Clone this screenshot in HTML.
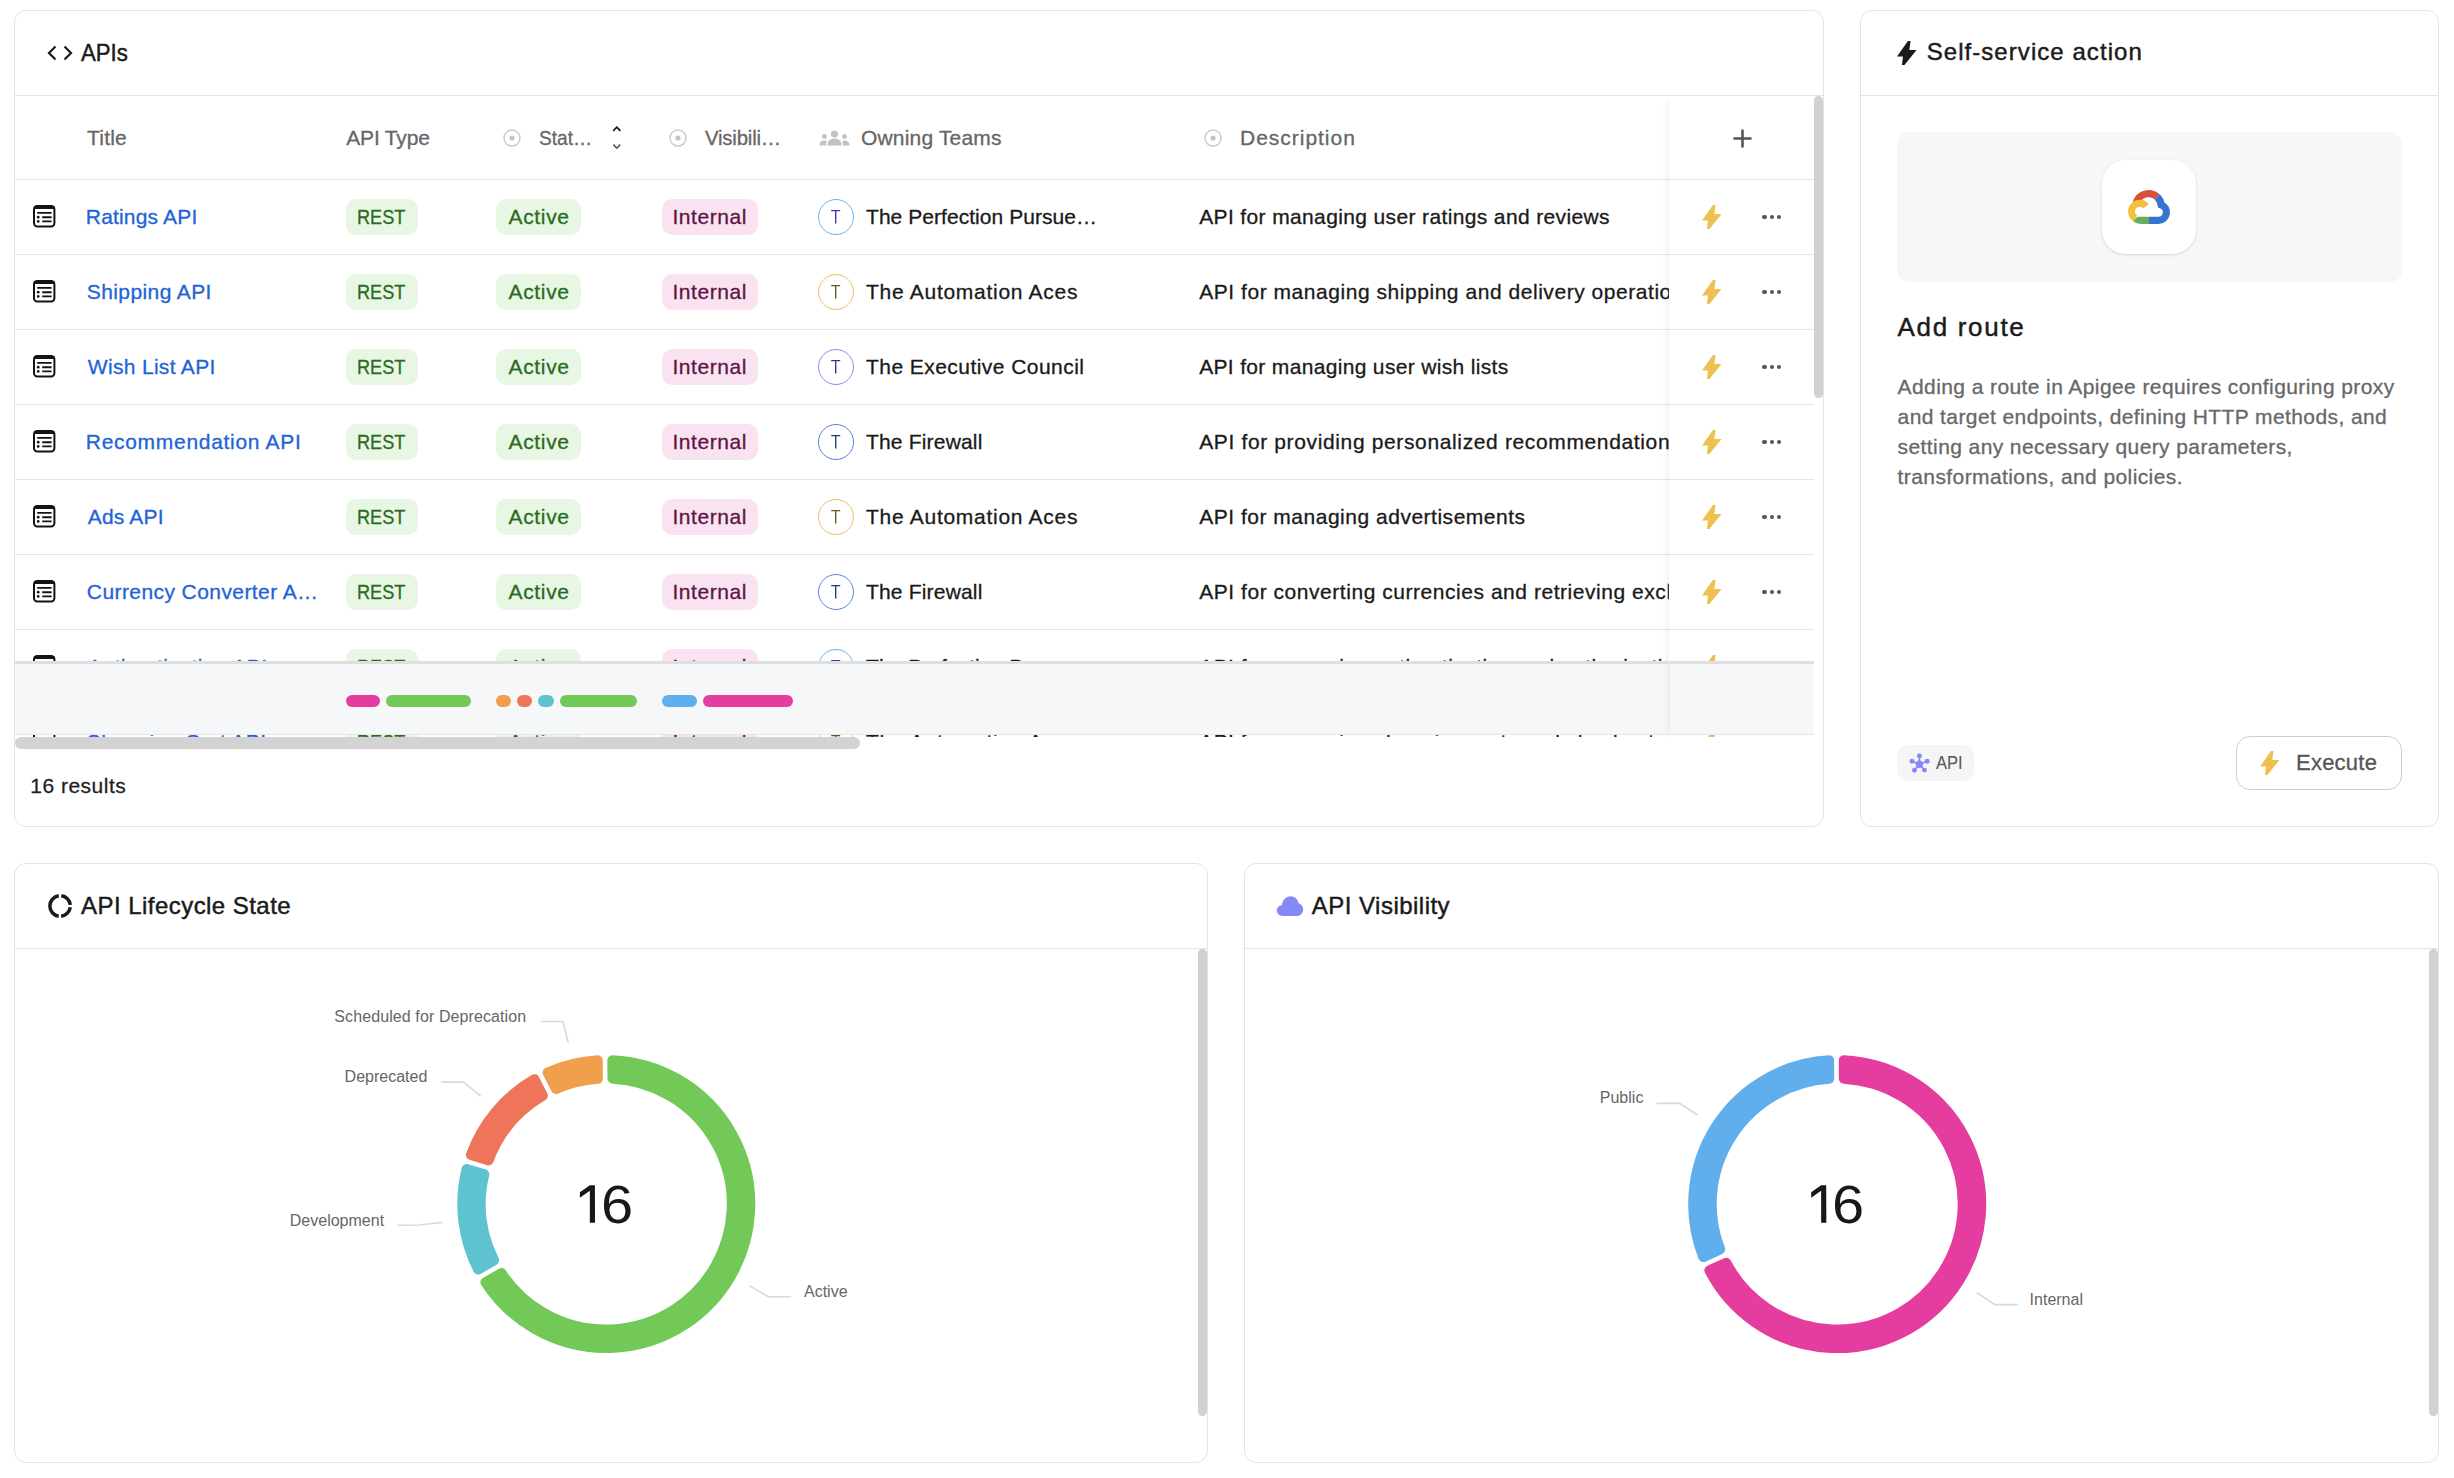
<!DOCTYPE html>
<html><head><meta charset="utf-8"><title>APIs dashboard</title>
<style>
html,body{margin:0;padding:0;background:#fff;}
body{width:2454px;height:1478px;position:relative;overflow:hidden;font-family:"Liberation Sans", sans-serif;}
.t{position:absolute;white-space:nowrap;-webkit-text-stroke:0.3px currentColor;}
</style></head><body>
<div style="position:absolute;left:14px;top:10px;width:1810px;height:817px;border:1px solid #e4e4e4;border-radius:12px;box-sizing:border-box;background:#fff"></div>
<div style="position:absolute;left:1860px;top:10px;width:579px;height:817px;border:1px solid #e4e4e4;border-radius:12px;box-sizing:border-box;background:#fff"></div>
<div style="position:absolute;left:14px;top:863px;width:1194px;height:600px;border:1px solid #e4e4e4;border-radius:12px;box-sizing:border-box;background:#fff"></div>
<div style="position:absolute;left:1244px;top:863px;width:1195px;height:600px;border:1px solid #e4e4e4;border-radius:12px;box-sizing:border-box;background:#fff"></div>
<div style="position:absolute;left:15px;top:95px;width:1808px;height:1px;background:#e4e4e4"></div>
<div style="position:absolute;left:1861px;top:95px;width:577px;height:1px;background:#e4e4e4"></div>
<div style="position:absolute;left:15px;top:948px;width:1192px;height:1px;background:#e4e4e4"></div>
<div style="position:absolute;left:1245px;top:948px;width:1193px;height:1px;background:#e4e4e4"></div>
<svg style="position:absolute;left:47px;top:45px" width="26" height="16" viewBox="0 0 26 16"><path d="M8.5 1.5 L2 8 L8.5 14.5 M17.5 1.5 L24 8 L17.5 14.5" fill="none" stroke="#1a1a1a" stroke-width="2.2" stroke-linecap="butt" stroke-linejoin="miter"/></svg>
<div class="t" style="left:81.40px;top:40.88px;font-size:24px;line-height:24px;color:#1a1a1a;letter-spacing:0px;font-weight:400;transform:scaleX(0.925);transform-origin:0 0;-webkit-text-stroke:0.45px #1a1a1a;">APIs</div>
<div style="position:absolute;left:15px;top:96px;width:1808px;height:641px;overflow:hidden">
<div style="position:absolute;left:0px;top:83px;width:1799px;height:1px;background:#e6e6e6"></div>
<div class="t" style="left:72.10px;top:31.22px;font-size:21px;line-height:21px;color:#666666;letter-spacing:0.2px;font-weight:400;">Title</div>
<div class="t" style="left:331.30px;top:31.22px;font-size:21px;line-height:21px;color:#666666;letter-spacing:-0.186px;font-weight:400;">API Type</div>
<svg style="position:absolute;left:487.7px;top:33.0px" width="18" height="18" viewBox="0 0 18 18"><circle cx="9" cy="9" r="8" fill="none" stroke="#c9c9c9" stroke-width="1.4"/><circle cx="9" cy="9" r="2.6" fill="#c4c4c4"/></svg>
<div class="t" style="left:524.09px;top:31.22px;font-size:21px;line-height:21px;color:#666666;letter-spacing:0px;font-weight:400;transform:scaleX(0.91);transform-origin:0 0;">Stat…</div>
<svg style="position:absolute;left:596px;top:29px" width="12" height="26" viewBox="0 0 12 26"><path d="M2.2 5.9 L5.8 2.2 L9.4 5.9" fill="none" stroke="#111" stroke-width="1.6"/><path d="M2.4 19.6 L5.8 23.2 L9.2 19.6" fill="none" stroke="#555" stroke-width="1.6"/></svg>
<svg style="position:absolute;left:653.7px;top:33.0px" width="18" height="18" viewBox="0 0 18 18"><circle cx="9" cy="9" r="8" fill="none" stroke="#c9c9c9" stroke-width="1.4"/><circle cx="9" cy="9" r="2.6" fill="#c4c4c4"/></svg>
<div class="t" style="left:690.40px;top:31.22px;font-size:21px;line-height:21px;color:#666666;letter-spacing:-0.2px;font-weight:400;transform:scaleX(0.97);transform-origin:0 0;">Visibili…</div>
<svg style="position:absolute;left:803.5px;top:34px" width="31" height="16" viewBox="0 0 31 16"><circle cx="15.5" cy="4" r="3.6" fill="#c2c2c2"/><path d="M8.5 15.5 C8.5 10.5 11.5 8.5 15.5 8.5 C19.5 8.5 22.5 10.5 22.5 15.5 Z" fill="#c2c2c2"/><circle cx="5.5" cy="6.5" r="2.4" fill="#c2c2c2"/><path d="M0.5 15.5 C0.5 12 2.5 10.5 5.5 10.5 C6.5 10.5 7.2 10.7 7.8 11 C7.2 12.3 7 13.8 7 15.5 Z" fill="#c2c2c2"/><circle cx="25.5" cy="6.5" r="2.4" fill="#c2c2c2"/><path d="M30.5 15.5 C30.5 12 28.5 10.5 25.5 10.5 C24.5 10.5 23.8 10.7 23.2 11 C23.8 12.3 24 13.8 24 15.5 Z" fill="#c2c2c2"/></svg>
<div class="t" style="left:846.00px;top:31.22px;font-size:21px;line-height:21px;color:#666666;letter-spacing:0.182px;font-weight:400;">Owning Teams</div>
<svg style="position:absolute;left:1189.3px;top:33.0px" width="18" height="18" viewBox="0 0 18 18"><circle cx="9" cy="9" r="8" fill="none" stroke="#c9c9c9" stroke-width="1.4"/><circle cx="9" cy="9" r="2.6" fill="#c4c4c4"/></svg>
<div class="t" style="left:1225.00px;top:31.22px;font-size:21px;line-height:21px;color:#666666;letter-spacing:0.98px;font-weight:400;">Description</div>
<div style="position:absolute;left:0px;top:158px;width:1799px;height:1px;background:#e6e6e6"></div>
<svg style="position:absolute;left:18.200000000000003px;top:109.19999999999999px" width="23" height="23" viewBox="0 0 23 23"><rect x="1" y="1" width="20.4" height="20.4" rx="3.2" fill="none" stroke="#141414" stroke-width="2"/><rect x="1" y="1" width="20.4" height="3" fill="#141414"/><path d="M4.2 7.9 H18.6 M9.2 12.2 H18.6 M9.2 16.4 H18.6" stroke="#141414" stroke-width="1.9"/><circle cx="5.2" cy="12.2" r="1.35" fill="#141414"/><circle cx="5.2" cy="16.4" r="1.35" fill="#141414"/></svg>
<div class="t" style="left:70.80px;top:110.02px;font-size:21px;line-height:21px;color:#2263d6;letter-spacing:0.18px;font-weight:400;">Ratings API</div>
<div style="position:absolute;left:331px;top:103px;width:72px;height:36px;background:#e8f6e4;border-radius:10px"></div>
<div class="t" style="left:341.78px;top:110.02px;font-size:21px;line-height:21px;color:#2b6b1f;letter-spacing:0px;font-weight:400;transform:scaleX(0.862);transform-origin:0 0;">REST</div>
<div style="position:absolute;left:481px;top:103px;width:85px;height:36px;background:#e8f6e4;border-radius:10px"></div>
<div class="t" style="left:493.50px;top:110.02px;font-size:21px;line-height:21px;color:#2b6b1f;letter-spacing:0.66px;font-weight:400;">Active</div>
<div style="position:absolute;left:647px;top:103px;width:96px;height:36px;background:#fae3f0;border-radius:10px"></div>
<div class="t" style="left:657.40px;top:110.02px;font-size:21px;line-height:21px;color:#5c1645;letter-spacing:0.571px;font-weight:400;">Internal</div>
<div style="position:absolute;left:803px;top:103px;width:36px;height:36px;border:1.5px solid #63b3f3;border-radius:50%;box-sizing:border-box;"></div>
<svg style="position:absolute;left:815px;top:113px" width="12" height="15" viewBox="0 0 12 15"><path d="M1.2 1.6 H10.2 M5.7 1.6 V14.4" stroke="#3a36c4" stroke-width="1.35" fill="none"/></svg>
<div class="t" style="left:851.00px;top:110.02px;font-size:21px;line-height:21px;color:#1a1a1a;letter-spacing:0.048px;font-weight:400;">The Perfection Pursue…</div>
<div class="t" style="left:1184.20px;top:110.02px;font-size:21px;line-height:21px;color:#1a1a1a;letter-spacing:0.367px;font-weight:400;">API for managing user ratings and reviews</div>
<div style="position:absolute;left:0px;top:233px;width:1799px;height:1px;background:#e6e6e6"></div>
<svg style="position:absolute;left:18.200000000000003px;top:184.2px" width="23" height="23" viewBox="0 0 23 23"><rect x="1" y="1" width="20.4" height="20.4" rx="3.2" fill="none" stroke="#141414" stroke-width="2"/><rect x="1" y="1" width="20.4" height="3" fill="#141414"/><path d="M4.2 7.9 H18.6 M9.2 12.2 H18.6 M9.2 16.4 H18.6" stroke="#141414" stroke-width="1.9"/><circle cx="5.2" cy="12.2" r="1.35" fill="#141414"/><circle cx="5.2" cy="16.4" r="1.35" fill="#141414"/></svg>
<div class="t" style="left:71.80px;top:185.02px;font-size:21px;line-height:21px;color:#2263d6;letter-spacing:0.4px;font-weight:400;">Shipping API</div>
<div style="position:absolute;left:331px;top:178px;width:72px;height:36px;background:#e8f6e4;border-radius:10px"></div>
<div class="t" style="left:341.78px;top:185.02px;font-size:21px;line-height:21px;color:#2b6b1f;letter-spacing:0px;font-weight:400;transform:scaleX(0.862);transform-origin:0 0;">REST</div>
<div style="position:absolute;left:481px;top:178px;width:85px;height:36px;background:#e8f6e4;border-radius:10px"></div>
<div class="t" style="left:493.50px;top:185.02px;font-size:21px;line-height:21px;color:#2b6b1f;letter-spacing:0.66px;font-weight:400;">Active</div>
<div style="position:absolute;left:647px;top:178px;width:96px;height:36px;background:#fae3f0;border-radius:10px"></div>
<div class="t" style="left:657.40px;top:185.02px;font-size:21px;line-height:21px;color:#5c1645;letter-spacing:0.571px;font-weight:400;">Internal</div>
<div style="position:absolute;left:803px;top:178px;width:36px;height:36px;border:1.5px solid #efc15e;border-radius:50%;box-sizing:border-box;"></div>
<svg style="position:absolute;left:815px;top:188px" width="12" height="15" viewBox="0 0 12 15"><path d="M1.2 1.6 H10.2 M5.7 1.6 V14.4" stroke="#6b5418" stroke-width="1.35" fill="none"/></svg>
<div class="t" style="left:851.00px;top:185.02px;font-size:21px;line-height:21px;color:#1a1a1a;letter-spacing:0.722px;font-weight:400;">The Automation Aces</div>
<div class="t" style="left:1184.20px;top:185.02px;font-size:21px;line-height:21px;color:#1a1a1a;letter-spacing:0.543px;font-weight:400;">API for managing shipping and delivery operations</div>
<div style="position:absolute;left:0px;top:308px;width:1799px;height:1px;background:#e6e6e6"></div>
<svg style="position:absolute;left:18.200000000000003px;top:259.2px" width="23" height="23" viewBox="0 0 23 23"><rect x="1" y="1" width="20.4" height="20.4" rx="3.2" fill="none" stroke="#141414" stroke-width="2"/><rect x="1" y="1" width="20.4" height="3" fill="#141414"/><path d="M4.2 7.9 H18.6 M9.2 12.2 H18.6 M9.2 16.4 H18.6" stroke="#141414" stroke-width="1.9"/><circle cx="5.2" cy="12.2" r="1.35" fill="#141414"/><circle cx="5.2" cy="16.4" r="1.35" fill="#141414"/></svg>
<div class="t" style="left:72.80px;top:260.02px;font-size:21px;line-height:21px;color:#2263d6;letter-spacing:0.317px;font-weight:400;">Wish List API</div>
<div style="position:absolute;left:331px;top:253px;width:72px;height:36px;background:#e8f6e4;border-radius:10px"></div>
<div class="t" style="left:341.78px;top:260.02px;font-size:21px;line-height:21px;color:#2b6b1f;letter-spacing:0px;font-weight:400;transform:scaleX(0.862);transform-origin:0 0;">REST</div>
<div style="position:absolute;left:481px;top:253px;width:85px;height:36px;background:#e8f6e4;border-radius:10px"></div>
<div class="t" style="left:493.50px;top:260.02px;font-size:21px;line-height:21px;color:#2b6b1f;letter-spacing:0.66px;font-weight:400;">Active</div>
<div style="position:absolute;left:647px;top:253px;width:96px;height:36px;background:#fae3f0;border-radius:10px"></div>
<div class="t" style="left:657.40px;top:260.02px;font-size:21px;line-height:21px;color:#5c1645;letter-spacing:0.571px;font-weight:400;">Internal</div>
<div style="position:absolute;left:803px;top:253px;width:36px;height:36px;border:1.5px solid #8c8cf3;border-radius:50%;box-sizing:border-box;"></div>
<svg style="position:absolute;left:815px;top:263px" width="12" height="15" viewBox="0 0 12 15"><path d="M1.2 1.6 H10.2 M5.7 1.6 V14.4" stroke="#30309a" stroke-width="1.35" fill="none"/></svg>
<div class="t" style="left:851.00px;top:260.02px;font-size:21px;line-height:21px;color:#1a1a1a;letter-spacing:0.45px;font-weight:400;">The Executive Council</div>
<div class="t" style="left:1184.20px;top:260.02px;font-size:21px;line-height:21px;color:#1a1a1a;letter-spacing:0.329px;font-weight:400;">API for managing user wish lists</div>
<div style="position:absolute;left:0px;top:383px;width:1799px;height:1px;background:#e6e6e6"></div>
<svg style="position:absolute;left:18.200000000000003px;top:334.2px" width="23" height="23" viewBox="0 0 23 23"><rect x="1" y="1" width="20.4" height="20.4" rx="3.2" fill="none" stroke="#141414" stroke-width="2"/><rect x="1" y="1" width="20.4" height="3" fill="#141414"/><path d="M4.2 7.9 H18.6 M9.2 12.2 H18.6 M9.2 16.4 H18.6" stroke="#141414" stroke-width="1.9"/><circle cx="5.2" cy="12.2" r="1.35" fill="#141414"/><circle cx="5.2" cy="16.4" r="1.35" fill="#141414"/></svg>
<div class="t" style="left:70.80px;top:335.02px;font-size:21px;line-height:21px;color:#2263d6;letter-spacing:0.7px;font-weight:400;">Recommendation API</div>
<div style="position:absolute;left:331px;top:328px;width:72px;height:36px;background:#e8f6e4;border-radius:10px"></div>
<div class="t" style="left:341.78px;top:335.02px;font-size:21px;line-height:21px;color:#2b6b1f;letter-spacing:0px;font-weight:400;transform:scaleX(0.862);transform-origin:0 0;">REST</div>
<div style="position:absolute;left:481px;top:328px;width:85px;height:36px;background:#e8f6e4;border-radius:10px"></div>
<div class="t" style="left:493.50px;top:335.02px;font-size:21px;line-height:21px;color:#2b6b1f;letter-spacing:0.66px;font-weight:400;">Active</div>
<div style="position:absolute;left:647px;top:328px;width:96px;height:36px;background:#fae3f0;border-radius:10px"></div>
<div class="t" style="left:657.40px;top:335.02px;font-size:21px;line-height:21px;color:#5c1645;letter-spacing:0.571px;font-weight:400;">Internal</div>
<div style="position:absolute;left:803px;top:328px;width:36px;height:36px;border:1.5px solid #5b7fe0;border-radius:50%;box-sizing:border-box;"></div>
<svg style="position:absolute;left:815px;top:338px" width="12" height="15" viewBox="0 0 12 15"><path d="M1.2 1.6 H10.2 M5.7 1.6 V14.4" stroke="#1e3a78" stroke-width="1.35" fill="none"/></svg>
<div class="t" style="left:851.00px;top:335.02px;font-size:21px;line-height:21px;color:#1a1a1a;letter-spacing:0.182px;font-weight:400;">The Firewall</div>
<div class="t" style="left:1184.20px;top:335.02px;font-size:21px;line-height:21px;color:#1a1a1a;letter-spacing:0.636px;font-weight:400;">API for providing personalized recommendations</div>
<div style="position:absolute;left:0px;top:458px;width:1799px;height:1px;background:#e6e6e6"></div>
<svg style="position:absolute;left:18.200000000000003px;top:409.2px" width="23" height="23" viewBox="0 0 23 23"><rect x="1" y="1" width="20.4" height="20.4" rx="3.2" fill="none" stroke="#141414" stroke-width="2"/><rect x="1" y="1" width="20.4" height="3" fill="#141414"/><path d="M4.2 7.9 H18.6 M9.2 12.2 H18.6 M9.2 16.4 H18.6" stroke="#141414" stroke-width="1.9"/><circle cx="5.2" cy="12.2" r="1.35" fill="#141414"/><circle cx="5.2" cy="16.4" r="1.35" fill="#141414"/></svg>
<div class="t" style="left:72.80px;top:410.02px;font-size:21px;line-height:21px;color:#2263d6;letter-spacing:0.167px;font-weight:400;">Ads API</div>
<div style="position:absolute;left:331px;top:403px;width:72px;height:36px;background:#e8f6e4;border-radius:10px"></div>
<div class="t" style="left:341.78px;top:410.02px;font-size:21px;line-height:21px;color:#2b6b1f;letter-spacing:0px;font-weight:400;transform:scaleX(0.862);transform-origin:0 0;">REST</div>
<div style="position:absolute;left:481px;top:403px;width:85px;height:36px;background:#e8f6e4;border-radius:10px"></div>
<div class="t" style="left:493.50px;top:410.02px;font-size:21px;line-height:21px;color:#2b6b1f;letter-spacing:0.66px;font-weight:400;">Active</div>
<div style="position:absolute;left:647px;top:403px;width:96px;height:36px;background:#fae3f0;border-radius:10px"></div>
<div class="t" style="left:657.40px;top:410.02px;font-size:21px;line-height:21px;color:#5c1645;letter-spacing:0.571px;font-weight:400;">Internal</div>
<div style="position:absolute;left:803px;top:403px;width:36px;height:36px;border:1.5px solid #efc15e;border-radius:50%;box-sizing:border-box;"></div>
<svg style="position:absolute;left:815px;top:413px" width="12" height="15" viewBox="0 0 12 15"><path d="M1.2 1.6 H10.2 M5.7 1.6 V14.4" stroke="#6b5418" stroke-width="1.35" fill="none"/></svg>
<div class="t" style="left:851.00px;top:410.02px;font-size:21px;line-height:21px;color:#1a1a1a;letter-spacing:0.722px;font-weight:400;">The Automation Aces</div>
<div class="t" style="left:1184.20px;top:410.02px;font-size:21px;line-height:21px;color:#1a1a1a;letter-spacing:0.513px;font-weight:400;">API for managing advertisements</div>
<div style="position:absolute;left:0px;top:533px;width:1799px;height:1px;background:#e6e6e6"></div>
<svg style="position:absolute;left:18.200000000000003px;top:484.20000000000005px" width="23" height="23" viewBox="0 0 23 23"><rect x="1" y="1" width="20.4" height="20.4" rx="3.2" fill="none" stroke="#141414" stroke-width="2"/><rect x="1" y="1" width="20.4" height="3" fill="#141414"/><path d="M4.2 7.9 H18.6 M9.2 12.2 H18.6 M9.2 16.4 H18.6" stroke="#141414" stroke-width="1.9"/><circle cx="5.2" cy="12.2" r="1.35" fill="#141414"/><circle cx="5.2" cy="16.4" r="1.35" fill="#141414"/></svg>
<div class="t" style="left:71.80px;top:485.02px;font-size:21px;line-height:21px;color:#2263d6;letter-spacing:0.42px;font-weight:400;">Currency Converter A…</div>
<div style="position:absolute;left:331px;top:478px;width:72px;height:36px;background:#e8f6e4;border-radius:10px"></div>
<div class="t" style="left:341.78px;top:485.02px;font-size:21px;line-height:21px;color:#2b6b1f;letter-spacing:0px;font-weight:400;transform:scaleX(0.862);transform-origin:0 0;">REST</div>
<div style="position:absolute;left:481px;top:478px;width:85px;height:36px;background:#e8f6e4;border-radius:10px"></div>
<div class="t" style="left:493.50px;top:485.02px;font-size:21px;line-height:21px;color:#2b6b1f;letter-spacing:0.66px;font-weight:400;">Active</div>
<div style="position:absolute;left:647px;top:478px;width:96px;height:36px;background:#fae3f0;border-radius:10px"></div>
<div class="t" style="left:657.40px;top:485.02px;font-size:21px;line-height:21px;color:#5c1645;letter-spacing:0.571px;font-weight:400;">Internal</div>
<div style="position:absolute;left:803px;top:478px;width:36px;height:36px;border:1.5px solid #5b7fe0;border-radius:50%;box-sizing:border-box;"></div>
<svg style="position:absolute;left:815px;top:488px" width="12" height="15" viewBox="0 0 12 15"><path d="M1.2 1.6 H10.2 M5.7 1.6 V14.4" stroke="#1e3a78" stroke-width="1.35" fill="none"/></svg>
<div class="t" style="left:851.00px;top:485.02px;font-size:21px;line-height:21px;color:#1a1a1a;letter-spacing:0.182px;font-weight:400;">The Firewall</div>
<div class="t" style="left:1184.20px;top:485.02px;font-size:21px;line-height:21px;color:#1a1a1a;letter-spacing:0.542px;font-weight:400;">API for converting currencies and retrieving exchange rates</div>
<div style="position:absolute;left:0px;top:608px;width:1799px;height:1px;background:#e6e6e6"></div>
<svg style="position:absolute;left:18.200000000000003px;top:559.2px" width="23" height="23" viewBox="0 0 23 23"><rect x="1" y="1" width="20.4" height="20.4" rx="3.2" fill="none" stroke="#141414" stroke-width="2"/><rect x="1" y="1" width="20.4" height="3" fill="#141414"/><path d="M4.2 7.9 H18.6 M9.2 12.2 H18.6 M9.2 16.4 H18.6" stroke="#141414" stroke-width="1.9"/><circle cx="5.2" cy="12.2" r="1.35" fill="#141414"/><circle cx="5.2" cy="16.4" r="1.35" fill="#141414"/></svg>
<div class="t" style="left:72.80px;top:560.02px;font-size:21px;line-height:21px;color:#2263d6;letter-spacing:0.45px;font-weight:400;">Authentication API</div>
<div style="position:absolute;left:331px;top:553px;width:72px;height:36px;background:#e8f6e4;border-radius:10px"></div>
<div class="t" style="left:341.78px;top:560.02px;font-size:21px;line-height:21px;color:#2b6b1f;letter-spacing:0px;font-weight:400;transform:scaleX(0.862);transform-origin:0 0;">REST</div>
<div style="position:absolute;left:481px;top:553px;width:85px;height:36px;background:#e8f6e4;border-radius:10px"></div>
<div class="t" style="left:493.50px;top:560.02px;font-size:21px;line-height:21px;color:#2b6b1f;letter-spacing:0.66px;font-weight:400;">Active</div>
<div style="position:absolute;left:647px;top:553px;width:96px;height:36px;background:#fae3f0;border-radius:10px"></div>
<div class="t" style="left:657.40px;top:560.02px;font-size:21px;line-height:21px;color:#5c1645;letter-spacing:0.571px;font-weight:400;">Internal</div>
<div style="position:absolute;left:803px;top:553px;width:36px;height:36px;border:1.5px solid #63b3f3;border-radius:50%;box-sizing:border-box;"></div>
<svg style="position:absolute;left:815px;top:563px" width="12" height="15" viewBox="0 0 12 15"><path d="M1.2 1.6 H10.2 M5.7 1.6 V14.4" stroke="#3a36c4" stroke-width="1.35" fill="none"/></svg>
<div class="t" style="left:851.00px;top:560.02px;font-size:21px;line-height:21px;color:#1a1a1a;letter-spacing:0.048px;font-weight:400;">The Perfection Pursue…</div>
<div class="t" style="left:1184.20px;top:560.02px;font-size:21px;line-height:21px;color:#1a1a1a;letter-spacing:0.45px;font-weight:400;">API for managing authentication and authorization</div>
<svg style="position:absolute;left:18.200000000000003px;top:634.2px" width="23" height="23" viewBox="0 0 23 23"><rect x="1" y="1" width="20.4" height="20.4" rx="3.2" fill="none" stroke="#141414" stroke-width="2"/><rect x="1" y="1" width="20.4" height="3" fill="#141414"/><path d="M4.2 7.9 H18.6 M9.2 12.2 H18.6 M9.2 16.4 H18.6" stroke="#141414" stroke-width="1.9"/><circle cx="5.2" cy="12.2" r="1.35" fill="#141414"/><circle cx="5.2" cy="16.4" r="1.35" fill="#141414"/></svg>
<div class="t" style="left:71.80px;top:635.02px;font-size:21px;line-height:21px;color:#2263d6;letter-spacing:0.4px;font-weight:400;">Shopping Cart API</div>
<div style="position:absolute;left:331px;top:628px;width:72px;height:36px;background:#e8f6e4;border-radius:10px"></div>
<div class="t" style="left:341.78px;top:635.02px;font-size:21px;line-height:21px;color:#2b6b1f;letter-spacing:0px;font-weight:400;transform:scaleX(0.862);transform-origin:0 0;">REST</div>
<div style="position:absolute;left:481px;top:628px;width:85px;height:36px;background:#e8f6e4;border-radius:10px"></div>
<div class="t" style="left:493.50px;top:635.02px;font-size:21px;line-height:21px;color:#2b6b1f;letter-spacing:0.66px;font-weight:400;">Active</div>
<div style="position:absolute;left:647px;top:628px;width:96px;height:36px;background:#fae3f0;border-radius:10px"></div>
<div class="t" style="left:657.40px;top:635.02px;font-size:21px;line-height:21px;color:#5c1645;letter-spacing:0.571px;font-weight:400;">Internal</div>
<div style="position:absolute;left:803px;top:628px;width:36px;height:36px;border:1.5px solid #efc15e;border-radius:50%;box-sizing:border-box;"></div>
<svg style="position:absolute;left:815px;top:638px" width="12" height="15" viewBox="0 0 12 15"><path d="M1.2 1.6 H10.2 M5.7 1.6 V14.4" stroke="#6b5418" stroke-width="1.35" fill="none"/></svg>
<div class="t" style="left:851.00px;top:635.02px;font-size:21px;line-height:21px;color:#1a1a1a;letter-spacing:0.722px;font-weight:400;">The Automation Aces</div>
<div class="t" style="left:1184.20px;top:635.02px;font-size:21px;line-height:21px;color:#1a1a1a;letter-spacing:0.45px;font-weight:400;">API for managing shopping carts and checkout</div>
<div style="position:absolute;left:1654px;top:0px;width:145px;height:653px;background:#fff;box-shadow:-5px 0 8px -5px rgba(0,0,0,0.10)"></div>
<div style="position:absolute;left:1654px;top:83px;width:145px;height:1px;background:#e6e6e6"></div>
<svg style="position:absolute;left:1718px;top:33px" width="19" height="19" viewBox="0 0 19 19"><path d="M9.5 1.5 V17.5 M1.5 9.5 H17.5" stroke="#555" stroke-width="2.6" stroke-linecap="round"/></svg>
<div style="position:absolute;left:1654px;top:158px;width:145px;height:1px;background:#e6e6e6"></div>
<svg style="position:absolute;left:1687.1px;top:108.95px" width="20" height="25" viewBox="0 0 20 25"><path d="M10.93 0 H13.56 L12.31 9.05 H19.56 L7.46 23.95 H4.95 L5.96 15.55 H0 Z" fill="#ecc14f"/></svg>
<div style="position:absolute;left:1747.4px;top:118.5px;width:4.9px;height:4.9px;border-radius:50%;background:#555"></div>
<div style="position:absolute;left:1754.5px;top:118.5px;width:4.9px;height:4.9px;border-radius:50%;background:#555"></div>
<div style="position:absolute;left:1761.6px;top:118.5px;width:4.9px;height:4.9px;border-radius:50%;background:#555"></div>
<div style="position:absolute;left:1654px;top:233px;width:145px;height:1px;background:#e6e6e6"></div>
<svg style="position:absolute;left:1687.1px;top:183.95px" width="20" height="25" viewBox="0 0 20 25"><path d="M10.93 0 H13.56 L12.31 9.05 H19.56 L7.46 23.95 H4.95 L5.96 15.55 H0 Z" fill="#ecc14f"/></svg>
<div style="position:absolute;left:1747.4px;top:193.5px;width:4.9px;height:4.9px;border-radius:50%;background:#555"></div>
<div style="position:absolute;left:1754.5px;top:193.5px;width:4.9px;height:4.9px;border-radius:50%;background:#555"></div>
<div style="position:absolute;left:1761.6px;top:193.5px;width:4.9px;height:4.9px;border-radius:50%;background:#555"></div>
<div style="position:absolute;left:1654px;top:308px;width:145px;height:1px;background:#e6e6e6"></div>
<svg style="position:absolute;left:1687.1px;top:258.95px" width="20" height="25" viewBox="0 0 20 25"><path d="M10.93 0 H13.56 L12.31 9.05 H19.56 L7.46 23.95 H4.95 L5.96 15.55 H0 Z" fill="#ecc14f"/></svg>
<div style="position:absolute;left:1747.4px;top:268.5px;width:4.9px;height:4.9px;border-radius:50%;background:#555"></div>
<div style="position:absolute;left:1754.5px;top:268.5px;width:4.9px;height:4.9px;border-radius:50%;background:#555"></div>
<div style="position:absolute;left:1761.6px;top:268.5px;width:4.9px;height:4.9px;border-radius:50%;background:#555"></div>
<div style="position:absolute;left:1654px;top:383px;width:145px;height:1px;background:#e6e6e6"></div>
<svg style="position:absolute;left:1687.1px;top:333.95px" width="20" height="25" viewBox="0 0 20 25"><path d="M10.93 0 H13.56 L12.31 9.05 H19.56 L7.46 23.95 H4.95 L5.96 15.55 H0 Z" fill="#ecc14f"/></svg>
<div style="position:absolute;left:1747.4px;top:343.5px;width:4.9px;height:4.9px;border-radius:50%;background:#555"></div>
<div style="position:absolute;left:1754.5px;top:343.5px;width:4.9px;height:4.9px;border-radius:50%;background:#555"></div>
<div style="position:absolute;left:1761.6px;top:343.5px;width:4.9px;height:4.9px;border-radius:50%;background:#555"></div>
<div style="position:absolute;left:1654px;top:458px;width:145px;height:1px;background:#e6e6e6"></div>
<svg style="position:absolute;left:1687.1px;top:408.95px" width="20" height="25" viewBox="0 0 20 25"><path d="M10.93 0 H13.56 L12.31 9.05 H19.56 L7.46 23.95 H4.95 L5.96 15.55 H0 Z" fill="#ecc14f"/></svg>
<div style="position:absolute;left:1747.4px;top:418.5px;width:4.9px;height:4.9px;border-radius:50%;background:#555"></div>
<div style="position:absolute;left:1754.5px;top:418.5px;width:4.9px;height:4.9px;border-radius:50%;background:#555"></div>
<div style="position:absolute;left:1761.6px;top:418.5px;width:4.9px;height:4.9px;border-radius:50%;background:#555"></div>
<div style="position:absolute;left:1654px;top:533px;width:145px;height:1px;background:#e6e6e6"></div>
<svg style="position:absolute;left:1687.1px;top:483.95px" width="20" height="25" viewBox="0 0 20 25"><path d="M10.93 0 H13.56 L12.31 9.05 H19.56 L7.46 23.95 H4.95 L5.96 15.55 H0 Z" fill="#ecc14f"/></svg>
<div style="position:absolute;left:1747.4px;top:493.5px;width:4.9px;height:4.9px;border-radius:50%;background:#555"></div>
<div style="position:absolute;left:1754.5px;top:493.5px;width:4.9px;height:4.9px;border-radius:50%;background:#555"></div>
<div style="position:absolute;left:1761.6px;top:493.5px;width:4.9px;height:4.9px;border-radius:50%;background:#555"></div>
<div style="position:absolute;left:1654px;top:608px;width:145px;height:1px;background:#e6e6e6"></div>
<svg style="position:absolute;left:1687.1px;top:558.95px" width="20" height="25" viewBox="0 0 20 25"><path d="M10.93 0 H13.56 L12.31 9.05 H19.56 L7.46 23.95 H4.95 L5.96 15.55 H0 Z" fill="#ecc14f"/></svg>
<div style="position:absolute;left:1747.4px;top:568.5px;width:4.9px;height:4.9px;border-radius:50%;background:#555"></div>
<div style="position:absolute;left:1754.5px;top:568.5px;width:4.9px;height:4.9px;border-radius:50%;background:#555"></div>
<div style="position:absolute;left:1761.6px;top:568.5px;width:4.9px;height:4.9px;border-radius:50%;background:#555"></div>
<svg style="position:absolute;left:1687.1px;top:633.95px" width="20" height="25" viewBox="0 0 20 25"><path d="M10.93 0 H13.56 L12.31 9.05 H19.56 L7.46 23.95 H4.95 L5.96 15.55 H0 Z" fill="#ecc14f"/></svg>
<div style="position:absolute;left:1747.4px;top:643.5px;width:4.9px;height:4.9px;border-radius:50%;background:#555"></div>
<div style="position:absolute;left:1754.5px;top:643.5px;width:4.9px;height:4.9px;border-radius:50%;background:#555"></div>
<div style="position:absolute;left:1761.6px;top:643.5px;width:4.9px;height:4.9px;border-radius:50%;background:#555"></div>
<div style="position:absolute;left:0px;top:565px;width:1799px;height:3px;background:#dfdfdf"></div>
<div style="position:absolute;left:0px;top:568px;width:1799px;height:71px;background:#f6f7f9;border-bottom:1px solid #e6e6e6;box-sizing:border-box"></div>
<div style="position:absolute;left:1654px;top:565px;width:145px;height:74px;box-shadow:-5px 0 8px -5px rgba(0,0,0,0.08);border-left:1px solid #ececec"></div>
<div style="position:absolute;left:331px;top:599px;width:34px;height:12px;background:#e53d9f;border-radius:6px"></div>
<div style="position:absolute;left:371px;top:599px;width:85px;height:12px;background:#72c957;border-radius:6px"></div>
<div style="position:absolute;left:481px;top:599px;width:15px;height:12px;background:#f0a04c;border-radius:6px"></div>
<div style="position:absolute;left:502px;top:599px;width:15px;height:12px;background:#ee7559;border-radius:6px"></div>
<div style="position:absolute;left:523px;top:599px;width:16px;height:12px;background:#5fc2cf;border-radius:6px"></div>
<div style="position:absolute;left:545px;top:599px;width:77px;height:12px;background:#72c957;border-radius:6px"></div>
<div style="position:absolute;left:647px;top:599px;width:35px;height:12px;background:#60aeeb;border-radius:6px"></div>
<div style="position:absolute;left:688px;top:599px;width:90px;height:12px;background:#e53d9f;border-radius:6px"></div>
</div>
<div style="position:absolute;left:15px;top:737px;width:845px;height:12px;background:#d3d3d3;border-radius:6px"></div>
<div style="position:absolute;left:1814px;top:96px;width:9px;height:302px;background:#d1d1d1;border-radius:4.5px"></div>
<div class="t" style="left:30.30px;top:775.22px;font-size:21px;line-height:21px;color:#1f1f1f;letter-spacing:0.489px;font-weight:400;">16 results</div>
<svg style="position:absolute;left:1896.5px;top:41px" width="20" height="25" viewBox="0 0 20 25"><path d="M10.93 0 H13.56 L12.31 9.05 H19.56 L7.46 23.95 H4.95 L5.96 15.55 H0 Z" fill="#1a1a1a"/></svg>
<div class="t" style="left:1926.70px;top:40.48px;font-size:24px;line-height:24px;color:#1a1a1a;letter-spacing:1.056px;font-weight:400;-webkit-text-stroke:0.45px #1a1a1a;">Self-service action</div>
<div style="position:absolute;left:1897px;top:132px;width:505px;height:150px;background:#f6f7f9;border-radius:12px"></div>
<div style="position:absolute;left:2102px;top:159.5px;width:94px;height:94.5px;background:#fff;border-radius:24px;box-shadow:0 1px 3px rgba(0,0,0,0.14)"></div>
<svg style="position:absolute;left:2090px;top:150px" width="120" height="115" viewBox="0 0 1542 1478">
<path d="M593.9 678.3 A166 166 0 0 1 861.1 601.1" fill="none" stroke="#d94f3d" stroke-width="92"/>
<path d="M861.1 601.1 Q905 640 915 704.7 A102.5 102.5 0 0 1 880 903.5 H755" fill="none" stroke="#3574cf" stroke-width="93"/>
<path d="M757 857 V950 H650 Q585 945 550 913 L612 857 Z" fill="#68ad5d"/>
<path d="M583.8 879.9 A106 106 0 1 1 721.2 721.9" fill="none" stroke="#f2c03d" stroke-width="88"/>
</svg>
<div class="t" style="left:1897.60px;top:313.99px;font-size:26px;line-height:26px;color:#1a1a1a;letter-spacing:1.675px;font-weight:400;-webkit-text-stroke:0.45px #1a1a1a;">Add route</div>
<div class="t" style="left:1897.60px;top:376.42px;font-size:21px;line-height:21px;color:#686868;letter-spacing:0.406px;font-weight:400;">Adding a route in Apigee requires configuring proxy</div>
<div class="t" style="left:1897.60px;top:406.12px;font-size:21px;line-height:21px;color:#686868;letter-spacing:0.406px;font-weight:400;">and target endpoints, defining HTTP methods, and</div>
<div class="t" style="left:1897.60px;top:435.82px;font-size:21px;line-height:21px;color:#686868;letter-spacing:0.406px;font-weight:400;">setting any necessary query parameters,</div>
<div class="t" style="left:1897.60px;top:465.52px;font-size:21px;line-height:21px;color:#686868;letter-spacing:0.406px;font-weight:400;">transformations, and policies.</div>
<div style="position:absolute;left:1897px;top:745px;width:77px;height:36px;background:#f5f5f5;border-radius:11px"></div>
<svg style="position:absolute;left:1908px;top:753px" width="23" height="21" viewBox="0 0 23 21">
<g stroke="#8589f5" stroke-width="1.7"><path d="M11.4 11.2 L11.4 2.9 M11.4 11.2 L4 8.3 M11.4 11.2 L19.2 8.3 M11.4 11.2 L6.5 17.3 M11.4 11.2 L16.5 17.1"/></g>
<g fill="#8589f5"><circle cx="11.4" cy="11.2" r="3.7"/><circle cx="11.4" cy="2.9" r="2.45"/><circle cx="4" cy="8.3" r="2.45"/><circle cx="19.2" cy="8.3" r="2.45"/><circle cx="6.5" cy="17.3" r="2.45"/><circle cx="16.5" cy="17.1" r="2.45"/></g></svg>
<div class="t" style="left:1936.40px;top:753.22px;font-size:19px;line-height:19px;color:#5a5a5a;letter-spacing:0px;font-weight:400;transform:scaleX(0.87);transform-origin:0 0;-webkit-text-stroke:0.1px #5a5a5a;">API</div>
<div style="position:absolute;left:2236px;top:736px;width:166px;height:53.5px;border:1.5px solid #cdcdcd;border-radius:14px;box-sizing:border-box"></div>
<svg style="position:absolute;left:2260.4px;top:751px" width="20" height="25" viewBox="0 0 20 25"><path d="M10.93 0 H13.56 L12.31 9.05 H19.56 L7.46 23.95 H4.95 L5.96 15.55 H0 Z" fill="#ecc14f"/></svg>
<div class="t" style="left:2296.00px;top:751.78px;font-size:22px;line-height:22px;color:#555;letter-spacing:0.233px;font-weight:400;">Execute</div>
<svg style="position:absolute;left:48px;top:894px" width="24.2" height="24" viewBox="0 0 24.2 24">
<circle cx="12.1" cy="12" r="10.25" fill="none" stroke="#1a1a1a" stroke-width="3.5" stroke-dasharray="13.6 2.5 13.6 2.5 29.2 2.5" stroke-dashoffset="-1.25" transform="rotate(-90 12.1 12)"/></svg>
<div class="t" style="left:81.10px;top:893.58px;font-size:24px;line-height:24px;color:#1a1a1a;letter-spacing:0.45px;font-weight:400;-webkit-text-stroke:0.45px #1a1a1a;">API Lifecycle State</div>
<svg style="position:absolute;left:1276px;top:895px" width="28" height="22" viewBox="0 0 28 22">
<path d="M7 21 C3.2 21 0.8 18.6 0.8 15.6 C0.8 12.7 3 10.5 5.8 10.2 C6.5 5 10 1.2 14.6 1.2 C18.6 1.2 21.8 4 22.5 8.2 C25.3 9 27.2 11.5 27.2 14.6 C27.2 18.2 24.6 21 21 21 Z" fill="#8589f5"/></svg>
<div class="t" style="left:1311.80px;top:893.58px;font-size:24px;line-height:24px;color:#1a1a1a;letter-spacing:0.477px;font-weight:400;-webkit-text-stroke:0.45px #1a1a1a;">API Visibility</div>
<div style="position:absolute;left:1198px;top:949px;width:9px;height:467px;background:#d1d1d1;border-radius:4.5px"></div>
<div style="position:absolute;left:2429px;top:949px;width:9px;height:467px;background:#d1d1d1;border-radius:4.5px"></div>
<svg style="position:absolute;left:0;top:0" width="2454" height="1478" viewBox="0 0 2454 1478">
<path d="M612.34 1060.13 A144 144 0 1 1 485.40 1282.23 L501.45 1272.97 A125.5 125.5 0 1 0 612.51 1078.65 Z" fill="#72c957" stroke="#72c957" stroke-width="10" stroke-linejoin="round"/>
<path d="M478.10 1269.59 A144 144 0 0 1 466.63 1168.93 L484.35 1174.35 A125.5 125.5 0 0 0 494.15 1260.32 Z" fill="#5fc2cf" stroke="#5fc2cf" stroke-width="10" stroke-linejoin="round"/>
<path d="M470.90 1154.97 A144 144 0 0 1 534.51 1079.17 L542.92 1095.68 A125.5 125.5 0 0 0 488.62 1160.39 Z" fill="#ee7559" stroke="#ee7559" stroke-width="10" stroke-linejoin="round"/>
<path d="M547.51 1072.55 A144 144 0 0 1 597.75 1060.25 L597.91 1078.78 A125.5 125.5 0 0 0 555.93 1089.05 Z" fill="#f0a04c" stroke="#f0a04c" stroke-width="10" stroke-linejoin="round"/>
<path d="M1843.75 1060.25 A144 144 0 1 1 1709.36 1270.38 L1726.22 1262.70 A125.5 125.5 0 1 0 1843.84 1078.78 Z" fill="#e53d9f" stroke="#e53d9f" stroke-width="10" stroke-linejoin="round"/>
<path d="M1703.31 1257.10 A144 144 0 0 1 1829.15 1060.33 L1829.24 1078.85 A125.5 125.5 0 0 0 1720.17 1249.41 Z" fill="#60aeeb" stroke="#60aeeb" stroke-width="10" stroke-linejoin="round"/>
<polyline points="541,1021.5 563,1021.5 568.2,1042.6" fill="none" stroke="#d9d9d9" stroke-width="1.6"/>
<polyline points="441.4,1082.1 463.6,1082.1 480.8,1096.4" fill="none" stroke="#d9d9d9" stroke-width="1.6"/>
<polyline points="397.4,1225.3 419.4,1225 442.1,1222.4" fill="none" stroke="#d9d9d9" stroke-width="1.6"/>
<polyline points="749.3,1285.6 768.4,1296.7 791.3,1296.7" fill="none" stroke="#d9d9d9" stroke-width="1.6"/>
<polyline points="1656.5,1103.4 1679.5,1103.4 1697.6,1115" fill="none" stroke="#d9d9d9" stroke-width="1.6"/>
<polyline points="1976.6,1292.7 1994.9,1304.6 2017.9,1304.6" fill="none" stroke="#d9d9d9" stroke-width="1.6"/>
</svg>
<div class="t" style="left:334.30px;top:1008.66px;font-size:16px;line-height:16px;color:#666;letter-spacing:0.1px;font-weight:400;-webkit-text-stroke:0;">Scheduled for Deprecation</div>
<div class="t" style="left:344.60px;top:1069.36px;font-size:16px;line-height:16px;color:#666;letter-spacing:0px;font-weight:400;-webkit-text-stroke:0;">Deprecated</div>
<div class="t" style="left:289.80px;top:1212.66px;font-size:16px;line-height:16px;color:#666;letter-spacing:0px;font-weight:400;-webkit-text-stroke:0;">Development</div>
<div class="t" style="left:804.00px;top:1284.06px;font-size:16px;line-height:16px;color:#666;letter-spacing:0px;font-weight:400;-webkit-text-stroke:0;">Active</div>
<div class="t" style="left:1599.80px;top:1090.36px;font-size:16px;line-height:16px;color:#666;letter-spacing:0px;font-weight:400;-webkit-text-stroke:0;">Public</div>
<div class="t" style="left:2029.60px;top:1292.26px;font-size:16px;line-height:16px;color:#666;letter-spacing:0px;font-weight:400;-webkit-text-stroke:0;">Internal</div>
<svg style="position:absolute;left:0;top:0" width="2454" height="1478"><polygon points="589.84,1185.16 579.90,1192.26 579.90,1197.71 589.84,1190.84 589.84,1222.82 595.05,1222.82 594.90,1185.16" fill="#181818"/></svg>
<div class="t" style="left:601.10px;top:1176.79px;font-size:54px;line-height:54px;color:#181818;letter-spacing:0px;font-weight:400;transform:scaleX(1.07);transform-origin:0 0;-webkit-text-stroke:0;">6</div>
<svg style="position:absolute;left:0;top:0" width="2454" height="1478"><polygon points="1821.14,1185.16 1811.20,1192.26 1811.20,1197.71 1821.14,1190.84 1821.14,1222.82 1826.35,1222.82 1826.20,1185.16" fill="#181818"/></svg>
<div class="t" style="left:1832.40px;top:1176.79px;font-size:54px;line-height:54px;color:#181818;letter-spacing:0px;font-weight:400;transform:scaleX(1.07);transform-origin:0 0;-webkit-text-stroke:0;">6</div>
</body></html>
